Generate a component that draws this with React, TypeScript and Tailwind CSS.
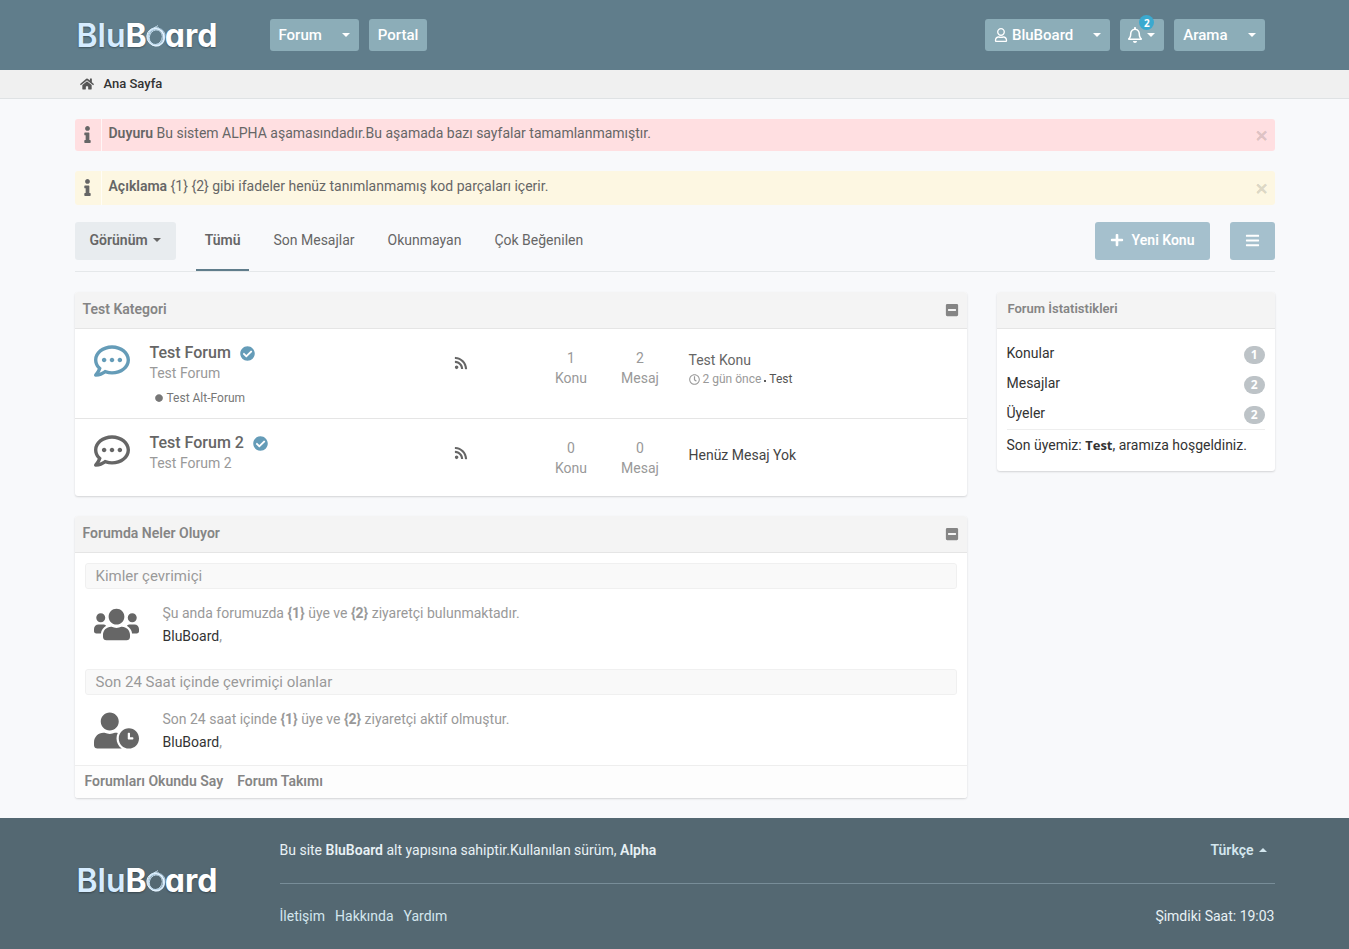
import type { ReactNode } from "react";
import {
  FaBars,
  FaCheckCircle,
  FaCircle,
  FaHome,
  FaInfo,
  FaMinusSquare,
  FaPlus,
  FaRegBell,
  FaRegClock,
  FaRegCommentDots,
  FaRegUser,
  FaRss,
  FaUserClock,
  FaUsers,
} from "react-icons/fa";

const container = "mx-auto w-full max-w-[1200px]";
const navButton =
  "relative flex h-8 cursor-pointer items-center rounded-[3px] bg-[#8cadb8] text-[15px] leading-5 font-medium text-white";

function Caret({ up = false }: { up?: boolean }) {
  return (
    <svg
      viewBox="0 0 8 4"
      className={up ? "h-1 w-2 rotate-180" : "h-1 w-2"}
      fill="currentColor"
      aria-hidden="true"
    >
      <path d="M0 0h8L4 4z" />
    </svg>
  );
}

function Logo() {
  return (
    <a
      href="#"
      aria-label="BluBoard"
      className="flex items-baseline pt-[2px] font-['Inter',sans-serif] text-[32px] leading-10 font-bold text-white [font-feature-settings:'cv11'] [text-shadow:0_1px_2px_rgb(0_0_0/0.35)]"
    >
      <span className="font-semibold text-[#d6ecff]">Blu</span>
      <span>B</span>
      <svg viewBox="0 0 20 22" className="-mx-px mb-[9px] h-[22px] w-5 self-end overflow-visible" fill="none" aria-hidden="true">
        <ellipse cx="10" cy="12" rx="8" ry="8.4" stroke="#d6ecff" strokeWidth="1.8" />
        <ellipse cx="10.4" cy="11.6" rx="9" ry="7.8" stroke="#b9d6ea" strokeWidth="0.9" transform="rotate(-35 10.4 11.6)" />
        <ellipse cx="9.6" cy="12.2" rx="9.2" ry="8.4" stroke="#eaf6ff" strokeWidth="0.9" transform="rotate(50 9.6 12.2)" />
        <ellipse cx="9.8" cy="12.2" rx="6.4" ry="7.4" stroke="#c6dff0" strokeWidth="0.9" transform="rotate(20 9.8 12.2)" />
        <path d="M6 5C8 2 10 2 12 .6M3 7c2-4 6-5 10-4" stroke="#cfe6f7" strokeWidth="0.9" />
      </svg>
      <span>ard</span>
    </a>
  );
}

function Header() {
  return (
    <header className="bg-[#607d8b]">
      <div className={`${container} flex h-[70px] items-center justify-between pr-[10px]`}>
        <div className="flex items-center">
          <div className="w-[195px] pl-[2px]">
            <Logo />
          </div>
          <nav className="flex gap-[10px]">
            <button type="button" className={`${navButton} gap-5 px-[9px]`}>
              Forum <Caret />
            </button>
            <a href="#" className={`${navButton} px-[9px]`}>
              Portal
            </a>
          </nav>
        </div>
        <div className="flex gap-[10px]">
          <button type="button" className={`${navButton} gap-5 px-[9px]`}>
            <span className="flex items-center gap-1">
              <FaRegUser className="size-[14px]" />
              BluBoard
            </span>
            <Caret />
          </button>
          <button type="button" aria-label="Bildirimler" className={`${navButton} gap-1 pr-[9px] pl-[7px]`}>
            <FaRegBell className="size-4" />
            <Caret />
            <span className="absolute -top-1 left-[19px] flex size-[15px] items-center justify-center rounded-full bg-[#3ba9cf] font-['Open_Sans',sans-serif] text-[10px] leading-none font-bold">
              2
            </span>
          </button>
          <button type="button" className={`${navButton} gap-5 px-[9px]`}>
            Arama <Caret />
          </button>
        </div>
      </div>
    </header>
  );
}

function Alert({ tone, title, children }: { tone: "red" | "yellow"; title: string; children: ReactNode }) {
  return (
    <div
      role="alert"
      className={
        tone === "red"
          ? "flex h-8 items-stretch rounded-[3px] bg-[#ffdfe1]"
          : "flex h-[34px] items-stretch rounded-[3px] bg-[#fdf7e2]"
      }
    >
      <span className="flex w-[27px] items-center justify-center border-r border-white/70 pb-[2px]">
        <FaInfo className="size-[17px]" />
      </span>
      <p className="flex-1 self-center px-[7px] pb-1 leading-5">
        <strong className="font-semibold">{title}</strong> {children}
      </p>
      <button
        type="button"
        aria-label="Kapat"
        className="cursor-pointer px-[6px] font-['Open_Sans',sans-serif] text-[24px] leading-none font-bold text-black/15"
      >
        ×
      </button>
    </div>
  );
}

const tabs = ["Tümü", "Son Mesajlar", "Okunmayan", "Çok Beğenilen"];

function Toolbar() {
  return (
    <div className="mt-[17px] flex items-start justify-between border-b border-[#e5e8ea]">
      <div className="flex gap-5">
        <button
          type="button"
          className="flex h-[38px] cursor-pointer items-center gap-[5px] rounded-[3px] bg-[#e8ecef] px-[15px] pb-[2px] font-semibold"
        >
          Görünüm <Caret />
        </button>
        <nav className="flex gap-[15px]">
          {tabs.map((tab, i) => (
            <a
              key={tab}
              href="#"
              className={
                i === 0
                  ? "h-[49px] border-b-2 border-[#607d8b] px-[9px] pt-2 leading-5 font-semibold"
                  : "h-[49px] px-[9px] pt-2 leading-5"
              }
            >
              {tab}
            </a>
          ))}
        </nav>
      </div>
      <div className="flex gap-5 font-semibold text-white">
        <button
          type="button"
          className="flex h-[38px] cursor-pointer items-center gap-2 rounded-[3px] bg-[#a5c0cd] px-[15px] pb-[2px]"
        >
          <FaPlus className="size-[14px]" />
          Yeni Konu
        </button>
        <button
          type="button"
          aria-label="Menü"
          className="flex h-[38px] w-[45px] cursor-pointer items-center justify-center rounded-[3px] bg-[#a5c0cd] pb-[2px]"
        >
          <FaBars className="size-[15px]" />
        </button>
      </div>
    </div>
  );
}

function Card({ title, collapsible = false, children }: { title: string; collapsible?: boolean; children: ReactNode }) {
  return (
    <section className="overflow-hidden rounded-[3px] bg-white shadow-[0_1px_2px_rgb(0_0_0/0.15)]">
      <div
        className={
          collapsible
            ? "flex h-[37px] items-center justify-between border-b border-[#e5e5e5] bg-[#f4f4f4] px-2 text-[#858585]"
            : "flex h-[37px] items-center border-b border-[#e5e5e5] bg-[#f4f4f4] px-[11px] text-[13px] text-[#858585]"
        }
      >
        <h2 className="pb-[2px] leading-5 font-semibold">{title}</h2>
        {collapsible && (
          <button type="button" aria-label={`${title} daralt`} className="cursor-pointer">
            <FaMinusSquare className="size-[14px]" />
          </button>
        )}
      </div>
      {children}
    </section>
  );
}

function Count({ value, label }: { value: number; label: string }) {
  return (
    <div className="mt-[5px] w-[69px] text-center leading-5 text-[#999]">
      <div>{value}</div>
      <div>{label}</div>
    </div>
  );
}

type Forum = {
  title: string;
  description: string;
  child?: string;
  unread: boolean;
  topics: number;
  posts: number;
  last: ReactNode;
};

const forums: Forum[] = [
  {
    title: "Test Forum",
    description: "Test Forum",
    child: "Test Alt-Forum",
    unread: true,
    topics: 1,
    posts: 2,
    last: (
      <div className="mt-[7px]">
        <a href="#" className="block leading-5">
          Test Konu
        </a>
        <div className="flex items-center text-[12px] leading-[18px] text-[#999]">
          <FaRegClock className="mr-[3px] size-[11px]" />
          2 gün önce
          <FaCircle className="mx-[3px] mt-1 size-[2px] text-[#333]" />
          <a href="#" className="text-[#555]">
            Test
          </a>
        </div>
      </div>
    ),
  },
  {
    title: "Test Forum 2",
    description: "Test Forum 2",
    unread: false,
    topics: 0,
    posts: 0,
    last: <div className="mt-3 leading-5 text-[#444]">Henüz Mesaj Yok</div>,
  },
];

function ForumRow({ forum }: { forum: Forum }) {
  return (
    <li className="flex items-start border-b border-[#e5e5e5] px-[19px] pt-[14px] pb-[10px] last:border-b-0 last:pb-[18px]">
      <FaRegCommentDots className={forum.unread ? "mr-5 size-9 text-[#659cb8]" : "mr-5 size-9"} />
      <div className="w-[304px] shrink-0">
        <h3 className="flex items-center gap-[9px] text-[16px] leading-5 font-medium">
          <a href="#">{forum.title}</a>
          <FaCheckCircle className="size-[15px] text-[#659cb8]" />
        </h3>
        <p className="leading-5 text-[#999]">{forum.description}</p>
        {forum.child && (
          <a href="#" className="mt-[5px] flex items-center gap-1 pl-[5px] text-[12px] leading-5 text-[#777]">
            <FaCircle className="size-2" />
            {forum.child}
          </a>
        )}
      </div>
      <a href="#" aria-label="RSS" className="mt-[13px] mr-[69px]">
        <FaRss className="size-[14px]" />
      </a>
      <Count value={forum.topics} label="Konu" />
      <Count value={forum.posts} label="Mesaj" />
      <div className="flex-1 pl-[14px]">{forum.last}</div>
    </li>
  );
}

function OnlineBlock({ title, icon, children }: { title: string; icon: ReactNode; children: ReactNode }) {
  return (
    <div>
      <h3 className="rounded-[3px] border border-[#f0f0f0] bg-[#f9f9f9] px-[10px] text-[15px] leading-6 text-[#999]">
        {title}
      </h3>
      <div className="flex h-[70px] items-start gap-6 px-[9px] pt-[13px]">
        {icon}
        <div className="leading-[23px] text-[#999]">
          <p>{children}</p>
          <p>
            <a href="#" className="text-[#333]">
              BluBoard
            </a>
            ,
          </p>
        </div>
      </div>
    </div>
  );
}

const stats = [
  { label: "Konular", value: 1 },
  { label: "Mesajlar", value: 2 },
  { label: "Üyeler", value: 2 },
];

function Sidebar() {
  return (
    <aside className="w-[278px] shrink-0">
      <Card title="Forum İstatistikleri">
        <div className="px-[10px] pt-[9px] pb-4 text-[#333]">
          <dl>
            {stats.map((s) => (
              <div key={s.label} className="flex h-[30px] items-center justify-between">
                <dt>{s.label}</dt>
                <dd className="mt-1 rounded-full bg-[#bdc3c7] px-[7px] font-['Open_Sans',sans-serif] text-[12px] leading-[18px] font-bold text-white">
                  {s.value}
                </dd>
              </div>
            ))}
          </dl>
          <p className="mt-px border-t border-[#eee] pt-[5px] leading-5">
            Son üyemiz:{" "}
            <a href="#" className="font-['Open_Sans',sans-serif] text-[13px] font-bold">
              Test
            </a>
            , aramıza hoşgeldiniz.
          </p>
        </div>
      </Card>
    </aside>
  );
}

function Footer() {
  return (
    <footer className="bg-[#546872] text-[#e8f1f5]">
      <div className={`${container} flex items-center`}>
        <div className="w-[205px] shrink-0 pb-2 pl-[2px]">
          <Logo />
        </div>
        <div className="flex-1">
          <div className="flex h-[65px] items-center justify-between pb-[2px]">
            <p>
              Bu site <strong className="font-semibold">BluBoard</strong> alt yapısına sahiptir.Kullanılan sürüm,{" "}
              <strong className="font-semibold">Alpha</strong>
            </p>
            <button type="button" className="flex cursor-pointer items-center gap-[5px] pr-2 font-semibold text-[#d3e6ee]">
              Türkçe <Caret up />
            </button>
          </div>
          <div className="flex h-[66px] items-center justify-between border-t border-[#788d98] pb-[2px]">
            <nav className="flex gap-[10px] text-[#d3e6ee]">
              <a href="#">İletişim</a>
              <a href="#">Hakkında</a>
              <a href="#">Yardım</a>
            </nav>
            <p>Şimdiki Saat: 19:03</p>
          </div>
        </div>
      </div>
    </footer>
  );
}

export default function App() {
  return (
    <div className="flex min-h-screen flex-col bg-[#f8f9fb] font-['Roboto',sans-serif] text-[14px] leading-5 text-[#666]">
      <Header />
      <nav aria-label="breadcrumb" className="border-b border-[#dfe2e4] bg-[#f0f0f0]">
        <div className={`${container} flex h-7 items-center gap-[10px] pl-[5px] text-[13px] font-medium`}>
          <FaHome className="size-[14px] text-[#555]" />
          <a href="#" className="text-[#333]">
            Ana Sayfa
          </a>
        </div>
      </nav>
      <main className={`${container} flex-1 pt-5 pb-5`}>
        <div className="flex flex-col gap-5">
          <Alert tone="red" title="Duyuru">
            Bu sistem ALPHA aşamasındadır.Bu aşamada bazı sayfalar tamamlanmamıştır.
          </Alert>
          <Alert tone="yellow" title="Açıklama">
            {"{1} {2} gibi ifadeler henüz tanımlanmamış kod parçaları içerir."}
          </Alert>
        </div>
        <Toolbar />
        <div className="mt-5 flex items-start gap-[30px]">
          <div className="flex min-w-0 flex-1 flex-col gap-5">
            <Card title="Test Kategori" collapsible>
              <ul>
                {forums.map((f) => (
                  <ForumRow key={f.title} forum={f} />
                ))}
              </ul>
            </Card>
            <Card title="Forumda Neler Oluyor" collapsible>
              <div className="flex flex-col gap-[10px] px-[10px] pt-[10px]">
                <OnlineBlock title="Kimler çevrimiçi" icon={<FaUsers className="size-[45px]" />}>
                  Şu anda forumuzda <strong>{"{1}"}</strong> üye ve <strong>{"{2}"}</strong> ziyaretçi bulunmaktadır.
                </OnlineBlock>
                <OnlineBlock title="Son 24 Saat içinde çevrimiçi olanlar" icon={<FaUserClock className="size-[45px]" />}>
                  Son 24 saat içinde <strong>{"{1}"}</strong> üye ve <strong>{"{2}"}</strong> ziyaretçi aktif olmuştur.
                </OnlineBlock>
              </div>
              <div className="flex h-[33px] items-center gap-[14px] border-t border-[#eee] bg-[#fdfdfd] px-[10px] pb-[2px] font-semibold text-[#858585]">
                <a href="#">Forumları Okundu Say</a>
                <a href="#">Forum Takımı</a>
              </div>
            </Card>
          </div>
          <Sidebar />
        </div>
      </main>
      <Footer />
    </div>
  );
}
